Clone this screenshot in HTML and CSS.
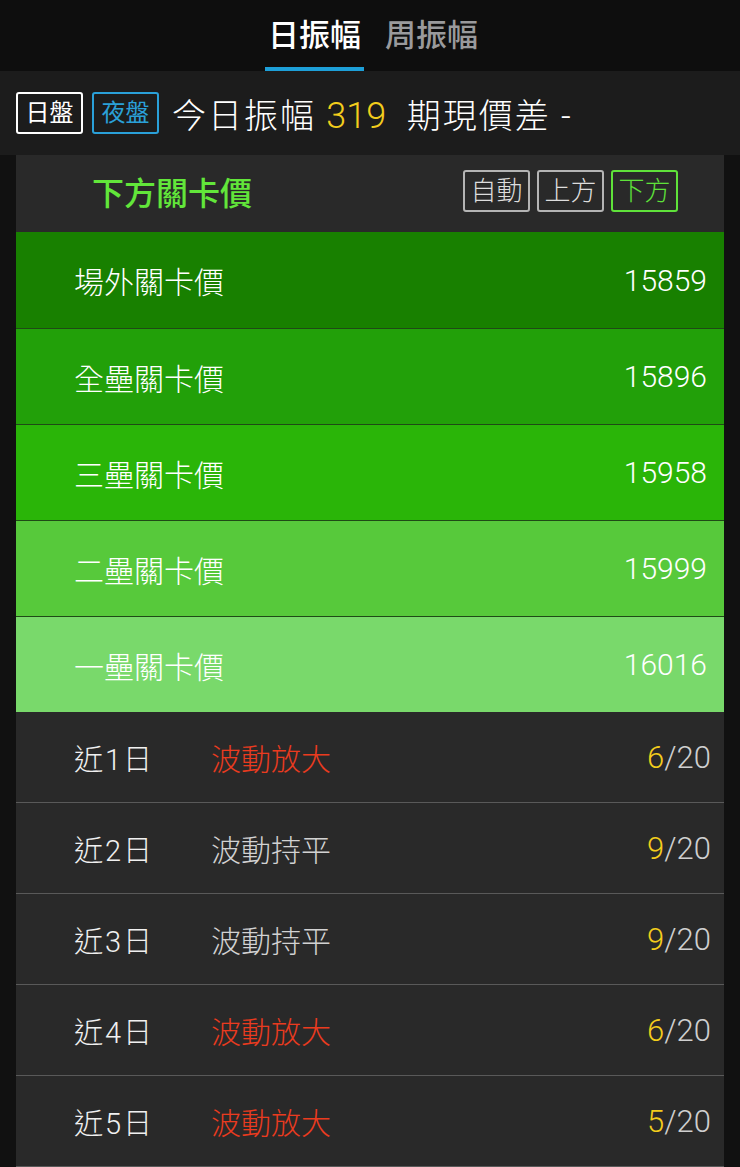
FILE: index.html
```html
<!DOCTYPE html>
<html lang="zh-TW">
<head>
    <meta charset="UTF-8">
    <meta name="viewport" content="width=device-width, initial-scale=1.0">
    <title>振幅關卡價</title>
    <link rel="stylesheet" href="styles.css">
</head>
<body>
    <div class="tabs">
        <div class="tab active">日振幅</div>
        <div class="tab">周振幅</div>
    </div>

    <div class="info-bar">
        <span class="session">日盤</span>
        <span class="session night">夜盤</span>
        <span class="info-text">今日振幅 <span class="yellow">319</span>&nbsp;&nbsp;期現價差 -</span>
    </div>

    <div class="wrap">
        <div class="card">
            <div class="card-head">
                <div class="card-title">下方關卡價</div>
                <div class="switches">
                    <span class="switch">自動</span>
                    <span class="switch">上方</span>
                    <span class="switch on">下方</span>
                </div>
            </div>

            <div class="level lv1"><span>場外關卡價</span><span class="num">15859</span></div>
            <div class="level lv2"><span>全壘關卡價</span><span class="num">15896</span></div>
            <div class="level lv3"><span>三壘關卡價</span><span class="num">15958</span></div>
            <div class="level lv4"><span>二壘關卡價</span><span class="num">15999</span></div>
            <div class="level lv5"><span>一壘關卡價</span><span class="num">16016</span></div>

            <div class="day-row">
                <span class="day">近1日</span>
                <span class="trend red">波動放大</span>
                <span class="count"><span class="yellow">6</span>/20</span>
            </div>
            <div class="day-row">
                <span class="day">近2日</span>
                <span class="trend">波動持平</span>
                <span class="count"><span class="yellow">9</span>/20</span>
            </div>
            <div class="day-row">
                <span class="day">近3日</span>
                <span class="trend">波動持平</span>
                <span class="count"><span class="yellow">9</span>/20</span>
            </div>
            <div class="day-row">
                <span class="day">近4日</span>
                <span class="trend red">波動放大</span>
                <span class="count"><span class="yellow">6</span>/20</span>
            </div>
            <div class="day-row">
                <span class="day">近5日</span>
                <span class="trend red">波動放大</span>
                <span class="count"><span class="yellow">5</span>/20</span>
            </div>
        </div>
    </div>
</body>
</html>
```

FILE: styles.css
```css
* {
    margin: 0;
    padding: 0;
    box-sizing: border-box;
}

body {
    font-family: 'Roboto', 'Noto Sans CJK TC', sans-serif;
    background-color: #111;
    color: #fff;
    width: 740px;
    overflow: hidden;
}

.tabs {
    height: 71px;
    background: #0e0e0e;
    display: flex;
    justify-content: center;
    align-items: flex-end;
    gap: 18px;
    padding-left: 6px;
}

.tab {
    font-size: 31px;
    line-height: 60px;
    height: 71px;
    padding: 6px 3px 0;
    color: #9a9a9c;
    font-weight: 500;
}

.tab.active {
    color: #fff;
    border-bottom: 4px solid #1d9fd8;
}

.info-bar {
    height: 84px;
    background: #1c1c1c;
    display: flex;
    align-items: center;
    padding-left: 16px;
    gap: 9px;
}

.session {
    border: 2px solid #fff;
    border-radius: 3px;
    font-size: 24px;
    line-height: 38px;
    width: 67px;
    text-align: center;
    color: #fff;
}

.session.night {
    border-color: #2aa0d8;
    color: #2aa0d8;
}

.info-text {
    font-size: 34px;
    font-weight: 300;
    margin-left: 4px;
    letter-spacing: 2px;
}

.info-text .yellow {
    font-size: 36px;
    letter-spacing: 0;
}

.yellow {
    color: #f3cd1c;
}

.wrap {
    padding: 0 16px;
}

.card {
    background: #292929;
}

.card-head {
    height: 77px;
    display: flex;
    align-items: center;
    justify-content: space-between;
    padding: 0 46px 6px 76px;
}

.card-title {
    color: #62e63a;
    font-size: 32px;
    font-weight: 500;
}

.switches {
    display: flex;
    gap: 7px;
}

.switch {
    border: 2px solid #b4b4b4;
    border-radius: 3px;
    width: 67px;
    line-height: 38px;
    text-align: center;
    font-size: 26px;
    font-weight: 300;
    color: #ddd;
}

.switch.on {
    border-color: #5fe23a;
    color: #5fe23a;
}

.level {
    height: 96px;
    display: flex;
    align-items: center;
    justify-content: space-between;
    padding: 0 17px 0 58px;
    font-size: 30px;
    font-weight: 300;
    border-top: 1px solid #1f4a16;
}

.level .num {
    font-size: 30px;
    font-weight: 300;
}

.lv1 { background: #188000; border-top: none; }
.lv2 { background: #22a009; }
.lv3 { background: #2ab508; }
.lv4 { background: #57c93b; }
.lv5 { background: #79d96b; }

.day-row {
    height: 91px;
    display: flex;
    align-items: center;
    padding: 0 13px 0 58px;
    border-bottom: 1px solid #595959;
}

.day {
    width: 137px;
    font-size: 29px;
    font-weight: 300;
    color: #f0f0f0;
    letter-spacing: 2px;
}

.trend {
    font-size: 30px;
    font-weight: 300;
    color: #d2d2d2;
    flex: 1;
}

.trend.red {
    color: #ea3b1f;
}

.count {
    font-size: 31px;
    font-weight: 300;
    color: #cfcfcf;
}
```
